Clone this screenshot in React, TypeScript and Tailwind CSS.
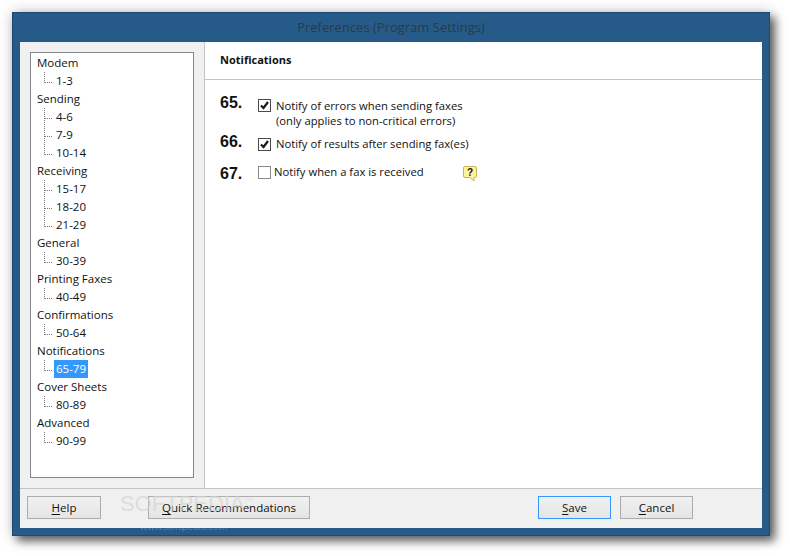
const tree = [
  { name: "Modem", items: ["1-3"] },
  { name: "Sending", items: ["4-6", "7-9", "10-14"] },
  { name: "Receiving", items: ["15-17", "18-20", "21-29"] },
  { name: "General", items: ["30-39"] },
  { name: "Printing Faxes", items: ["40-49"] },
  { name: "Confirmations", items: ["50-64"] },
  { name: "Notifications", items: ["65-79"] },
  { name: "Cover Sheets", items: ["80-89"] },
  { name: "Advanced", items: ["90-99"] },
];

const font = "[font-family:'Open_Sans','Noto_Sans',sans-serif]";

function Connector({ last }: { last: boolean }) {
  return (
    <svg width="17" height="18" className="shrink-0" stroke="#7a7a7a" strokeDasharray="1 1">
      <line x1="7.5" y1="0" x2="7.5" y2={last ? 11 : 18} />
      <line x1="8" y1="10.5" x2="16" y2="10.5" />
    </svg>
  );
}

function Check({ checked }: { checked: boolean }) {
  return (
    <span
      className={`flex h-[13px] w-[13px] shrink-0 items-center justify-center border bg-white ${
        checked ? "border-[#4a4a4a]" : "border-[#8a8a8a]"
      }`}
    >
      {checked && (
        <svg width="11" height="11" viewBox="0 0 11 11" fill="none" stroke="#1a1a1a" strokeWidth="2.2">
          <path d="M2 5.5l2.5 2.5L9 2" />
        </svg>
      )}
    </span>
  );
}

function Btn({ label, rest, w, active }: { label: string; rest: string; w: string; active?: boolean }) {
  return (
    <div
      className={`flex h-[23px] items-center justify-center border bg-gradient-to-b from-[#f0f0f0] to-[#e5e5e5] text-[11.5px] text-[#111] ${w} ${
        active ? "border-[#3399ff]" : "border-[#acacac]"
      }`}
    >
      <span className="underline underline-offset-2">{label}</span>
      {rest}
    </div>
  );
}

export default function App() {
  return (
    <div className={`h-[556px] w-[790px] overflow-hidden bg-white pt-3 pl-3 ${font}`}>
      <div className="relative flex h-[524px] w-[758px] flex-col border border-[#1d4a72] bg-[#265a88] shadow-[5px_5px_9px_rgba(0,0,0,0.6),0_0_14px_rgba(0,0,0,0.2)]">
        <div className="flex h-[29px] shrink-0 items-center justify-center text-[13px] text-[#2a3a4a]">
          Preferences (Program Settings)
        </div>
        <div className="mx-[7px] mb-[7px] flex min-h-0 flex-1 flex-col bg-white">
          <div className="flex min-h-0 flex-1">
            <div className="w-[185px] shrink-0 border-r border-[#c4c4c4] bg-[#f0f0f0] py-[10px] pl-[10px]">
              <div className="h-[426px] w-[164px] border border-[#828790] bg-white pt-[1px] pl-[6px] text-[11.5px] text-[#111]">
                {tree.map((g) => (
                  <div key={g.name}>
                    <div className="flex h-[18px] items-center">{g.name}</div>
                    {g.items.map((item, i) => (
                      <div key={item} className="flex h-[18px] items-center">
                        <Connector last={i === g.items.length - 1} />
                        <span
                          className={
                            item === "65-79" ? "flex h-[18px] items-center bg-[#3399ff] px-[2px] text-white" : "px-[2px]"
                          }
                        >
                          {item}
                        </span>
                      </div>
                    ))}
                  </div>
                ))}
              </div>
            </div>
            <div className="min-w-0 flex-1">
              <div className="flex h-[38px] items-center border-b border-[#c4c4c4] pl-[15px] text-[11px] font-bold text-[#111]">
                Notifications
              </div>
              <div className="pt-[11px] pl-[15px] text-[11.25px] text-[#111]">
                <div className="flex h-[39px]">
                  <span className="mt-[1px] w-[38px] text-[16px] leading-[22px] font-bold [font-family:'Liberation_Sans']">65.</span>
                  <span className="mt-[8px]">
                    <Check checked />
                  </span>
                  <span className="ml-[5px] pt-[7px] leading-[15px]">
                    Notify of errors when sending faxes
                    <br />
                    (only applies to non-critical errors)
                  </span>
                </div>
                <div className="flex h-[30px]">
                  <span className="mt-[1px] w-[38px] text-[16px] leading-[22px] font-bold [font-family:'Liberation_Sans']">66.</span>
                  <span className="mt-[8px]">
                    <Check checked />
                  </span>
                  <span className="ml-[5px] pt-[6px] leading-[15px]">Notify of results after sending fax(es)</span>
                </div>
                <div className="flex h-[30px]">
                  <span className="mt-[3px] w-[38px] text-[16px] leading-[22px] font-bold [font-family:'Liberation_Sans']">67.</span>
                  <span className="mt-[6px]">
                    <Check checked={false} />
                  </span>
                  <span className="ml-[3px] w-[189px] pt-[4px] leading-[15px]">Notify when a fax is received</span>
                  <svg width="14" height="16" viewBox="0 0 14 16" className="mt-[6px]">
                    <path
                      d="M2 .5h10a1.5 1.5 0 0 1 1.5 1.5v8a1.5 1.5 0 0 1-1.5 1.5h-1V15L7 11.5H2A1.5 1.5 0 0 1 .5 10V2A1.5 1.5 0 0 1 2 .5z"
                      fill="#fff3a0"
                      stroke="#c9b44f"
                    />
                    <text x="7" y="10" textAnchor="middle" fontSize="10" fontWeight="700" fill="#111" fontFamily="Liberation Sans">?</text>
                  </svg>
                </div>
              </div>
            </div>
          </div>
          <div className="flex h-[40px] shrink-0 items-start border-t border-[#c4c4c4] bg-[#f0f0f0] pt-[7px] pl-[7px]">
            <Btn label="H" rest="elp" w="w-[74px]" />
            <div className="ml-[47px]">
              <Btn label="Q" rest="uick Recommendations" w="w-[162px]" />
            </div>
            <div className="ml-[228px]">
              <Btn label="S" rest="ave" w="w-[73px]" active />
            </div>
            <div className="ml-[9px]">
              <Btn label="C" rest="ancel" w="w-[73px]" />
            </div>
          </div>
        </div>
        <div className="pointer-events-none absolute top-[474px] left-[107px] text-[22px] text-[#d4d4d4]/70 [font-family:'Liberation_Sans']">
          SOFTPEDIA<span className="align-super text-[8px]">™</span>
        </div>
        <div className="pointer-events-none absolute top-[507px] left-[127px] text-[9.5px] text-white/25">
          www.softpedia.com
        </div>
      </div>
    </div>
  );
}
